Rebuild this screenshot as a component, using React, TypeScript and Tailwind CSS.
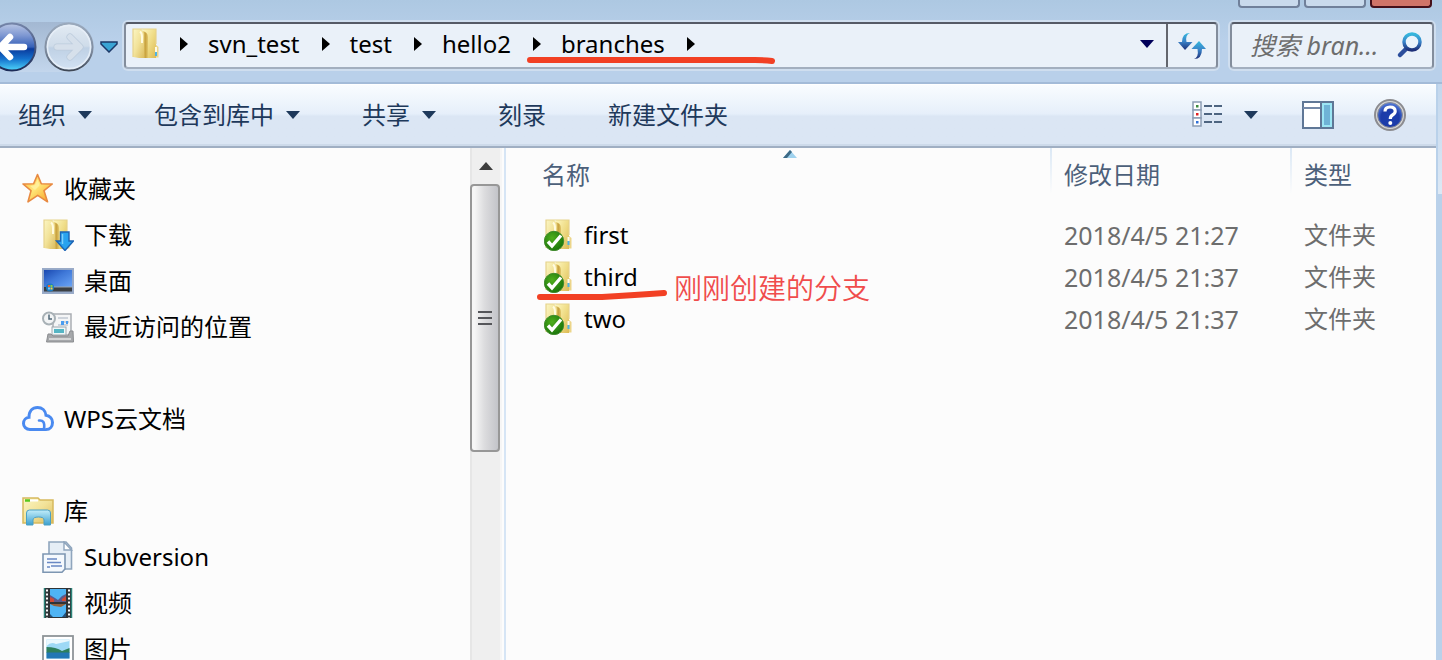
import type { ReactNode } from "react";

const TOOLBAR = [
  { label: "组织", menu: true },
  { label: "包含到库中", menu: true },
  { label: "共享", menu: true },
  { label: "刻录", menu: false },
  { label: "新建文件夹", menu: false },
];

const CRUMBS = ["svn_test", "test", "hello2", "branches"];

const FILES = [
  { name: "first", date: "2018/4/5 21:27", type: "文件夹" },
  { name: "third", date: "2018/4/5 21:37", type: "文件夹", note: "刚刚创建的分支" },
  { name: "two", date: "2018/4/5 21:37", type: "文件夹" },
];

/* Shared gradients, referenced by id from the icons below */
function Gradients() {
  return (
    <svg className="absolute size-0" aria-hidden="true">
      <defs>
        <linearGradient id="folderFront" x1="0" x2="1" y1="0" y2="1">
          <stop offset="0" stopColor="#fbf6c4" />
          <stop offset="0.5" stopColor="#f2e298" />
          <stop offset="1" stopColor="#dcbc5e" />
        </linearGradient>
        <linearGradient id="folderBack" x1="0" x2="1" y1="0" y2="1">
          <stop offset="0" stopColor="#fdf6bc" />
          <stop offset="0.5" stopColor="#efdc86" />
          <stop offset="1" stopColor="#dcba54" />
        </linearGradient>
        <linearGradient id="folderCrease" x1="0" x2="1" y1="0" y2="0">
          <stop offset="0" stopColor="#e9d27a" />
          <stop offset="0.6" stopColor="#c9a340" />
          <stop offset="1" stopColor="#e2c86e" />
        </linearGradient>
        <linearGradient id="backTop" x1="0" x2="0" y1="0" y2="1">
          <stop offset="0" stopColor="#b9c6e4" />
          <stop offset="0.25" stopColor="#7f98d2" />
          <stop offset="0.5" stopColor="#3560b8" />
          <stop offset="0.54" stopColor="#0a3a9c" />
          <stop offset="0.75" stopColor="#1470cc" />
          <stop offset="1" stopColor="#4fd6fb" />
        </linearGradient>
        <linearGradient id="backRim" x1="0" x2="0" y1="0" y2="1">
          <stop offset="0" stopColor="#7484a8" />
          <stop offset="1" stopColor="#1d2c58" />
        </linearGradient>
        <linearGradient id="fwdFill" x1="0" x2="0" y1="0" y2="1">
          <stop offset="0" stopColor="#e3ebf3" />
          <stop offset="0.48" stopColor="#cfdcea" />
          <stop offset="0.52" stopColor="#bfd1e5" />
          <stop offset="1" stopColor="#d3e2f3" />
        </linearGradient>
        <linearGradient id="fwdRim" x1="0" x2="0" y1="0" y2="1">
          <stop offset="0" stopColor="#9aa9bc" />
          <stop offset="0.6" stopColor="#7c899c" />
          <stop offset="1" stopColor="#3f4856" />
        </linearGradient>
        <linearGradient id="blueDown" x1="0" x2="0" y1="0" y2="1">
          <stop offset="0" stopColor="#36b8dd" />
          <stop offset="0.5" stopColor="#3a82c8" />
          <stop offset="1" stopColor="#1d2f78" />
        </linearGradient>
        <linearGradient id="star" x1="0" x2="1" y1="0" y2="1">
          <stop offset="0" stopColor="#ffb03a" />
          <stop offset="0.45" stopColor="#ffe87a" />
          <stop offset="1" stopColor="#f79a1c" />
        </linearGradient>
        <linearGradient id="screen" x1="0" x2="1" y1="0" y2="1">
          <stop offset="0" stopColor="#1a48b0" />
          <stop offset="0.45" stopColor="#3f78d8" />
          <stop offset="1" stopColor="#6aa4f6" />
        </linearGradient>
        <linearGradient id="stand" x1="0" x2="0" y1="0" y2="1">
          <stop offset="0" stopColor="#c3eefa" />
          <stop offset="1" stopColor="#3b9fce" />
        </linearGradient>
        <radialGradient id="badge" cx="0.4" cy="0.35" r="0.7">
          <stop offset="0" stopColor="#4fae1c" />
          <stop offset="1" stopColor="#17720a" />
        </radialGradient>
        <radialGradient id="help" cx="0.5" cy="0.6" r="0.6">
          <stop offset="0" stopColor="#1c3fae" />
          <stop offset="0.6" stopColor="#1c3ba8" />
          <stop offset="1" stopColor="#5c84e0" />
        </radialGradient>
      </defs>
    </svg>
  );
}

function Icon({ children }: { children: ReactNode }) {
  return (
    <svg viewBox="0 0 32 32" className="size-8 shrink-0" aria-hidden="true">
      {children}
    </svg>
  );
}

function StarIcon() {
  return (
    <Icon>
      <path d="M15.500 1.500 L19.300 10.800 L30.300 11 L22 17.700 L25.500 28.800 L15.700 22.300 L6 28.800 L9 17.700 L1 11 L11.600 10.800 Z" fill="url(#star)" stroke="#e88a42" strokeWidth="1.600" strokeLinejoin="round" />
      <path d="M15.500 6 L17.500 12.500 L13 17 L8 13 L13 12 Z" fill="#fff3a8" opacity="0.7" />
    </Icon>
  );
}

function FolderShape() {
  return (
    <>
      <path d="M24 16 L27.500 19 V29.500 H20 Z" fill="#ecd58a" />
      <path d="M12 1 H25 V30 H12 Z" fill="url(#folderBack)" />
      <path d="M11 3 Q17 4 17 9 V30 H11 Z" fill="url(#folderCrease)" />
      <path d="M2 1 H10 Q13 3 13 8 V30 L8 30 L2 29 Z" fill="url(#folderFront)" />
      <path d="M9 3.500 Q11 5 11 9 V15" fill="none" stroke="#fffbe0" strokeWidth="2" />
      <path d="M2 29 V1 H25 V16" fill="none" stroke="#e6d38c" strokeWidth="1.200" />
    </>
  );
}

function DownloadsIcon() {
  return (
    <Icon>
      <FolderShape />
      <path d="M18.500 13 H27 V22 H31.500 L23 31.500 L14.500 22 H18.500 Z" fill="#29a3ee" stroke="#1c64b4" strokeWidth="1.400" />
      <path d="M20.500 15 V25" stroke="#7fd0fb" strokeWidth="1.500" />
    </Icon>
  );
}

function DesktopIcon() {
  return (
    <Icon>
      <rect x="0.800" y="3.800" width="30.400" height="24.400" fill="#8fa5c6" stroke="#9aabc8" strokeWidth="1.600" />
      <rect x="2" y="5" width="28" height="17" fill="url(#screen)" />
      <rect x="2" y="22" width="28" height="4.500" fill="#3c4044" />
      <path d="M12 22 H30" stroke="#9aa4ae" />
      <circle cx="8" cy="22.500" r="4" fill="#1d7cc4" />
      <path d="M6 20 h2 v2 h-2 z" fill="#f0602c" />
      <path d="M8.500 20 h2 v2 h-2 z" fill="#8ed04a" />
      <path d="M6 22.500 h2 v2 h-2 z" fill="#7cc8f8" />
      <path d="M8.500 22.500 h2 v2 h-2 z" fill="#ffd23c" />
    </Icon>
  );
}

function RecentIcon() {
  return (
    <Icon>
      <path d="M11 3 H29 V24 H11 Z" fill="#f4f5f6" stroke="#a9adb2" strokeWidth="1.500" />
      <path d="M16 7 H26 M22 11 H27 M16 14 H26" stroke="#c0c8d2" strokeWidth="1.500" />
      <path d="M19 10 h3 v4 h-3 z M24 10 h2 v3 h-2 z" fill="#4a9df0" />
      <rect x="10" y="16" width="14" height="8" fill="#eef7f8" stroke="#a0a8ae" />
      <path d="M12 18 H22 V22 H12 Z" fill="#55b5c4" />
      <path d="M6 23 H9 L11 25 H26 L28 20 H31 L31.500 31 H4.500 Z" fill="#a5a7aa" stroke="#8b8d90" />
      <path d="M7 28 H29" stroke="#d4d5d6" strokeWidth="2" />
      <circle cx="7" cy="7.500" r="6" fill="#f2f4f5" stroke="#a8b1b6" strokeWidth="2" />
      <path d="M7 3.500 V8 H10" fill="none" stroke="#506878" strokeWidth="1.500" />
    </Icon>
  );
}

function CloudIcon() {
  return (
    <Icon>
      <path d="M22 26.500 H8 C4 26.500 1.500 23.500 1.500 20.500 C1.500 17 4 14.500 7 14.300 C7 8 10.500 4.500 15.500 4.500 C20 4.500 23.500 7.500 24 12.300 C28 13 30.500 16 30.500 19.500 C30.500 23.500 28 26.500 24 26.500" fill="none" stroke="#4a8af0" strokeWidth="3" strokeLinecap="round" />
      <path d="M17 17.500 C21 17 23 19 22 26" fill="none" stroke="#4a8af0" strokeWidth="2.600" strokeLinecap="round" />
    </Icon>
  );
}

function LibraryIcon() {
  return (
    <Icon>
      <path d="M1 3 H16 L18 5 H31 V28 H1 Z" fill="url(#folderFront)" stroke="#d6b95e" strokeWidth="1.500" />
      <path d="M8 5.500 H16" stroke="#fff" strokeWidth="2" />
      <path d="M3 5.500 H8" stroke="#57c81e" strokeWidth="2.500" />
      <path d="M4.500 30 V18 Q4.500 15 7.500 15 H25.500 Q28.500 15 28.500 18 V30 H22 V25 Q22 22 16.500 22 Q11 22 11 25 V30 Z" fill="url(#stand)" stroke="#4ba0c4" />
    </Icon>
  );
}

function SubversionIcon() {
  return (
    <Icon>
      <path d="M7 1 H24 L29.500 7 V28 H7 Z" fill="#e6eef6" stroke="#8fa5bd" strokeWidth="1.600" />
      <path d="M22 1 V9 H29.500 Z" fill="#fff" stroke="#8fa5bd" strokeWidth="1.400" />
      <path d="M1 13 H23 V28 L20 31.200 H1 Z" fill="#f5f9fd" stroke="#7d96b2" strokeWidth="1.600" />
      <path d="M5 18 H15 M5 21.500 H19 M9 25 H20 M5 26 H8" stroke="#6888c4" strokeWidth="1.700" />
    </Icon>
  );
}

function VideoIcon() {
  return (
    <Icon>
      <rect x="2" y="1" width="28" height="30" fill="#2f3336" />
      <path d="M2.500 1 V31 M29.500 1 V31" stroke="#2a8378" strokeWidth="1.500" />
      <path d="M5 2.500 V31 M27 2.500 V31" stroke="#fff" strokeWidth="2" strokeDasharray="2 2" />
      <rect x="8" y="2" width="16" height="13" fill="#4fb4f4" />
      <rect x="8" y="17" width="16" height="13" fill="#4fb4f4" />
      <path d="M8 8 L13 11 L16 13 L20 9 L24 7 V15 H8 Z" fill="#5a5a8c" />
      <path d="M8 10 L12 12 V15 H8 Z M20 12 L24 9 V14 H20 Z" fill="#cf4a34" />
      <path d="M8 17 H24 L19 20 L12 19 Z" fill="#92603c" />
      <path d="M8 27 L11 30 H8 Z M24 25 L20 30 H24 Z" fill="#23517c" />
    </Icon>
  );
}

function PictureIcon() {
  return (
    <Icon>
      <rect x="1" y="3" width="30" height="26" fill="#fff" stroke="#8e9498" strokeWidth="1.800" />
      <rect x="4.500" y="6.500" width="23" height="19" fill="#9ed9f6" />
      <path d="M4.500 13 Q9 8 14 11 L27.500 8 V6.500 H4.500 Z" fill="#eaf8fe" />
      <path d="M4.500 14 Q14 14 20 18 L27.500 15 V20 H4.500 Z" fill="#2d7f5c" />
      <path d="M4.500 19.500 H27.500 V25.500 H4.500 Z" fill="#2277b4" />
    </Icon>
  );
}

/* Folder with the green "up to date" overlay */
function VersionedFolderIcon() {
  return (
    <Icon>
      <FolderShape />
      <path d="M24.500 18 V22" stroke="#fffbe6" strokeWidth="2" />
      <path d="M24.500 22 V26" stroke="#4fb2e4" strokeWidth="2" />
      <circle cx="10" cy="22" r="9.700" fill="url(#badge)" stroke="#3f8a2c" />
      <path d="M4 22.500 L8 27 L17 16.500" fill="none" stroke="#fff" strokeWidth="3.400" />
    </Icon>
  );
}

function Caret({ className }: { className?: string }) {
  return (
    <svg viewBox="0 0 14 8" className={`h-2 w-[14px] shrink-0 ${className ?? ""}`} aria-hidden="true">
      <path d="M0 0 H14 L7 8 Z" fill="currentColor" />
    </svg>
  );
}

function CrumbArrow() {
  return (
    <svg viewBox="0 0 8 14" className="h-[14px] w-2 shrink-0" aria-hidden="true">
      <path d="M0 0 L8 7 L0 14 Z" fill="#000" />
    </svg>
  );
}

function CaptionButtons() {
  return (
    <div className="absolute top-0 right-[10px] flex h-2 gap-1">
      <button aria-label="最小化" className="w-[62px] rounded-b border-2 border-t-0 border-[#70809a] bg-[#c9daec]" />
      <button aria-label="最大化" className="w-[62px] rounded-b border-2 border-t-0 border-[#70809a] bg-[#c9daec]" />
      <button aria-label="关闭" className="w-[62px] rounded-b border-2 border-t-0 border-[#46101a] bg-[#d07468]" />
    </div>
  );
}

function NavButtons() {
  return (
    <div className="-ml-[13px] flex shrink-0 items-center">
      <div className="flex items-center gap-[7px] rounded-full bg-linear-to-b from-[#a3b8d2] to-[#c3d6ec]">
        <button aria-label="后退" className="size-[50px]">
          <svg viewBox="0 0 50 50" className="size-full">
            <circle cx="25" cy="25" r="23.500" fill="url(#backTop)" stroke="url(#backRim)" strokeWidth="2" />
            <path d="M23 15 L13.500 25 L23 35 M14 25 H37" fill="none" stroke="#fff" strokeWidth="6.500" strokeLinejoin="round" strokeLinecap="round" />
          </svg>
        </button>
        <button aria-label="前进" className="size-[50px]">
          <svg viewBox="0 0 50 50" className="size-full">
            <circle cx="25" cy="25" r="23.500" fill="url(#fwdFill)" stroke="url(#fwdRim)" strokeWidth="2" />
            <circle cx="25" cy="25" r="21.500" fill="none" stroke="#e6eef7" strokeWidth="1.500" />
            <path d="M26 15 L36 25 L26 35 M13 25 H35" fill="none" stroke="#bccbdc" strokeWidth="7" strokeLinejoin="round" strokeLinecap="round" />
            <path d="M26 15 L36 25 L26 35 M13 25 H35" fill="none" stroke="#d6e0eb" strokeWidth="5.500" strokeLinejoin="round" strokeLinecap="round" />
          </svg>
        </button>
      </div>
      <button aria-label="最近浏览的页面" className="ml-[6px] h-6 w-[18px]">
        <svg viewBox="0 0 18 12" className="h-3 w-[18px]">
          <path d="M1 1 H17 V3 L9 11 L1 3 Z" fill="#3aa4d4" stroke="#1c3868" strokeWidth="1.500" />
        </svg>
      </button>
    </div>
  );
}

function AddressBar() {
  return (
    <div className="flex h-[47px] min-w-0 flex-1 rounded-sm border-2 border-t-[#555a66] border-r-[#838d9c] border-b-[#a3afbf] border-l-[#838d9c] bg-[#eaf1f9] shadow-[0_0_0_2px_#cfdeef]">
      <nav aria-label="地址" className="flex min-w-0 flex-1 items-center pb-1 pl-[5px]">
        <svg viewBox="0 0 28 32" className="h-8 w-7 shrink-0" aria-hidden="true">
          <FolderShape />
          <path d="M25 19 V24" stroke="#fffbe6" strokeWidth="2" />
          <path d="M25 24 V28" stroke="#4fb2e4" strokeWidth="2" />
        </svg>
        <ol className="ml-[21px] flex items-center gap-5">
          <li className="flex"><CrumbArrow /></li>
          {CRUMBS.map((name) => (
            <li key={name} className="relative flex items-center gap-[22px]">
              <a href="#" className="text-black">{name}</a>
              <CrumbArrow />
              {name === "branches" && (
                <svg viewBox="0 0 248 10" className="absolute top-7 -left-[34px] h-[10px] w-[248px]" aria-hidden="true">
                  <path d="M3 4 H228 Q238 4 245 5" fill="none" stroke="#f24024" strokeWidth="6" strokeLinecap="round" />
                </svg>
              )}
            </li>
          ))}
        </ol>
        <button aria-label="以前的位置" className="ml-auto px-3 text-[#00005a]"><Caret /></button>
      </nav>
      <button aria-label="刷新" className="flex w-[50px] items-center justify-center border-l-2 border-[#63666e]">
        <svg viewBox="0 0 30 28" className="h-7 w-[30px]">
          <path d="M13 1 Q8 3 9.500 10 H15.500 L8 18 L1 10 H5 Q5 1 13 1 Z" fill="url(#blueDown)" />
          <path d="M17 27 Q22 25 20.500 17 H14.500 L22 9 L29 17 H25 Q25 27 17 27 Z" fill="url(#blueDown)" />
        </svg>
      </button>
    </div>
  );
}

function SearchBox() {
  return (
    <label className="flex h-[47px] w-[204px] shrink-0 items-center rounded-sm border-2 border-t-[#555a66] border-r-[#838d9c] border-b-[#a3afbf] border-l-[#838d9c] bg-[#eaf1f9] pr-2 pb-[2px] pl-[18px] shadow-[0_0_0_2px_#cfdeef]">
      <input
        type="text"
        aria-label="搜索"
        placeholder="搜索 bran..."
        className="min-w-0 flex-1 bg-transparent text-[25px] italic outline-none placeholder:text-[#6d6d6d] placeholder:opacity-100"
      />
      <svg viewBox="0 0 28 28" className="size-7 shrink-0" aria-hidden="true">
        <path d="M11 17 L4 24" stroke="#2c4e9c" strokeWidth="4.500" strokeLinecap="round" />
        <circle cx="16" cy="11" r="8" fill="#eaf4fc" stroke="url(#blueDown)" strokeWidth="3.500" />
      </svg>
    </label>
  );
}

function Toolbar() {
  return (
    <div className="flex h-16 shrink-0 items-center border-b-2 border-[#a0afc3] bg-linear-to-b from-[#fafdff] from-0% via-[#e6effa] via-48% to-[#dbe6f4] to-52% pr-[30px] pl-[18px] text-[#1e395b] shadow-[inset_0_-2px_0_#cddaea,inset_0_1px_0_#fff]">
      <div className="flex gap-[62px]">
        {TOOLBAR.map((t) => (
          <button key={t.label} className="flex items-center gap-3 whitespace-nowrap">
            {t.label}
            {t.menu && <Caret />}
          </button>
        ))}
      </div>
      <button aria-label="更改您的视图" className="ml-auto flex items-center gap-5">
        <svg viewBox="0 0 32 28" className="h-7 w-8" aria-hidden="true">
          {[1, 9, 17].map((y, i) => (
            <g key={y}>
              <rect x="1" y={y} width="8" height="8" fill="#fff" stroke="#8c9db4" strokeWidth="1.500" />
              <rect x="4" y={y + 3} width="2.500" height="2.500" fill={["#3d8a3d", "#e02020", "#3070d8"][i]} />
              <path d={`M12 ${y + 4} h8 M22 ${y + 4} h8`} stroke="#4d6480" strokeWidth="2" />
            </g>
          ))}
        </svg>
        <Caret />
      </button>
      <button aria-label="显示预览窗格" className="ml-11">
        <svg viewBox="0 0 32 28" className="h-7 w-8">
          <rect x="1" y="1" width="30" height="26" fill="#fff" stroke="#5f7796" strokeWidth="2" />
          <path d="M1 7 H18" stroke="#7489a8" strokeWidth="2" />
          <path d="M19 1 V27" stroke="#5f7796" strokeWidth="2" />
          <rect x="21" y="3" width="8" height="22" fill="#6fb3d6" stroke="#9ce6f4" strokeWidth="2" />
        </svg>
      </button>
      <button aria-label="获取帮助" className="ml-10">
        <svg viewBox="0 0 32 32" className="size-8">
          <circle cx="16" cy="16" r="15" fill="#d8d8d8" stroke="#8c8c90" strokeWidth="2" />
          <circle cx="16" cy="16" r="12.500" fill="url(#help)" stroke="#8a8c94" />
          <path d="M11 12.500 Q11 8 16 8 Q21.200 8 21.200 12.300 Q21.200 14.500 18.500 16 Q16.300 17.200 16.300 20" fill="none" stroke="#fff" strokeWidth="3.200" />
          <circle cx="16.300" cy="24" r="2" fill="#fff" />
        </svg>
      </button>
    </div>
  );
}

function NavGroup({ icon, label, children }: { icon: ReactNode; label: string; children?: ReactNode }) {
  return (
    <li>
      <a href="#" className="flex h-[46px] items-center gap-[10px] pl-[22px] whitespace-nowrap">{icon}{label}</a>
      {children && <ul>{children}</ul>}
    </li>
  );
}

function NavItem({ icon, label }: { icon: ReactNode; label: string }) {
  return (
    <li>
      <a href="#" className="flex h-[46px] items-center gap-[10px] pl-[42px] whitespace-nowrap">{icon}{label}</a>
    </li>
  );
}

function Sidebar() {
  return (
    <aside className="flex w-[506px] shrink-0 border-r-2 border-[#d6e5f5]">
      <ul className="flex min-w-0 flex-1 flex-col gap-[46px] overflow-hidden pt-[18px] text-black">
        <NavGroup icon={<StarIcon />} label="收藏夹">
          <NavItem icon={<DownloadsIcon />} label="下载" />
          <NavItem icon={<DesktopIcon />} label="桌面" />
          <NavItem icon={<RecentIcon />} label="最近访问的位置" />
        </NavGroup>
        <NavGroup icon={<CloudIcon />} label="WPS云文档" />
        <NavGroup icon={<LibraryIcon />} label="库">
          <NavItem icon={<SubversionIcon />} label="Subversion" />
          <NavItem icon={<VideoIcon />} label="视频" />
          <NavItem icon={<PictureIcon />} label="图片" />
        </NavGroup>
      </ul>
      {/* Scrollbar */}
      <div className="mr-[2px] flex w-8 flex-col border-x-2 border-[#e6e6e6] border-r-[#f6f6f6] bg-[#efefef]">
        <button aria-label="向上滚动" className="flex h-9 items-center justify-center text-[#3c3c3c]">
          <Caret className="rotate-180" />
        </button>
        <div className="-ml-[2px] flex h-[268px] w-[30px] flex-col items-center justify-center gap-1 rounded-sm border-2 border-[#979797] bg-linear-to-r from-[#f6f6f6] from-10% via-[#dcdcde] via-48% to-[#c3c4c9]">
          <span className="h-[2px] w-[14px] bg-[#55565a]" />
          <span className="h-[2px] w-[14px] bg-[#55565a]" />
          <span className="h-[2px] w-[14px] bg-[#55565a]" />
        </div>
      </div>
    </aside>
  );
}

function FileList() {
  return (
    <main className="min-w-0 flex-1">
      <table className="w-full table-fixed text-left text-[#6d6d6d]">
        <colgroup>
          <col />
          <col className="w-[240px]" />
          <col className="w-[146px]" />
        </colgroup>
        <thead className="text-[#4c607a]">
          <tr>
            <th scope="col" aria-sort="ascending" className="relative p-0 pb-5 font-normal">
              <svg viewBox="0 0 14 8" className="absolute top-[2px] left-[277px] h-2 w-[14px]" aria-hidden="true">
                <path d="M0 8 L7 0 L14 8 Z" fill="#9fd2ee" />
                <path d="M0 8 L7 0 L9 2 L4 8 Z" fill="#3d6a86" />
              </svg>
              <div className="h-[46px] pt-2 pl-9 leading-[38px]">名称</div>
            </th>
            <th scope="col" className="p-0 pb-5 font-normal">
              <div className="h-[46px] bg-linear-to-b from-[#dbe8f5] to-[#fcfcfc] bg-[length:2px_100%] bg-no-repeat pt-2 pl-[14px] leading-[38px]">修改日期</div>
            </th>
            <th scope="col" className="p-0 pb-5 font-normal">
              <div className="h-[46px] bg-linear-to-b from-[#dbe8f5] to-[#fcfcfc] bg-[length:2px_100%] bg-no-repeat pt-2 pl-[14px] leading-[38px]">类型</div>
            </th>
          </tr>
        </thead>
        <tbody>
          {FILES.map((f) => (
            <tr key={f.name} className="h-[42px]">
              <td className="p-0">
                <div className="relative flex h-[42px] items-center gap-2 pl-[38px] whitespace-nowrap text-black">
                  <VersionedFolderIcon />
                  {f.name}
                  {f.note && (
                    <>
                      <svg viewBox="0 0 132 12" className="absolute top-8 left-[30px] z-10 h-3 w-[132px]" aria-hidden="true">
                        <path d="M4 9 H66 Q100 7 128 5" fill="none" stroke="#f24024" strokeWidth="6" strokeLinecap="round" strokeLinejoin="round" />
                      </svg>
                      <span className="absolute top-3 left-[168px] text-[28px] leading-10 font-[350] text-[#f04c4c]">{f.note}</span>
                    </>
                  )}
                </div>
              </td>
              <td className="p-0 pl-[14px] text-[25px] whitespace-nowrap">{f.date}</td>
              <td className="p-0 pl-[14px] whitespace-nowrap">{f.type}</td>
            </tr>
          ))}
        </tbody>
      </table>
    </main>
  );
}

export default function App() {
  return (
    <div className="relative flex h-screen flex-col overflow-hidden bg-[#b9d1ea] font-['Noto_Sans','Noto_Sans_CJK_SC',sans-serif] text-[24px] leading-8">
      <Gradients />
      <header className="flex h-[82px] shrink-0 items-start bg-linear-to-b from-[#adc8e2] to-[#b9d0ea] to-50% pt-[22px] pr-2">
        <CaptionButtons />
        <NavButtons />
        <div className="ml-[6px] flex min-w-0 flex-1 gap-3">
          <AddressBar />
          <SearchBox />
        </div>
      </header>
      <div className="flex min-h-0 flex-1 border-t-2 border-[#a3bbd8]">
        <div className="flex min-w-0 flex-1 flex-col bg-[#fcfcfc]">
          <Toolbar />
          <div className="flex min-h-0 flex-1">
            <Sidebar />
            <FileList />
          </div>
        </div>
        {/* Glass frame on the right of the client area */}
        <div className="w-[6px] shrink-0 border-l-2 border-[#b9d1ea]">
          <div className="h-[110px] bg-linear-to-b from-[#c3d7ed] to-[#dde9f5]" />
        </div>
      </div>
    </div>
  );
}
